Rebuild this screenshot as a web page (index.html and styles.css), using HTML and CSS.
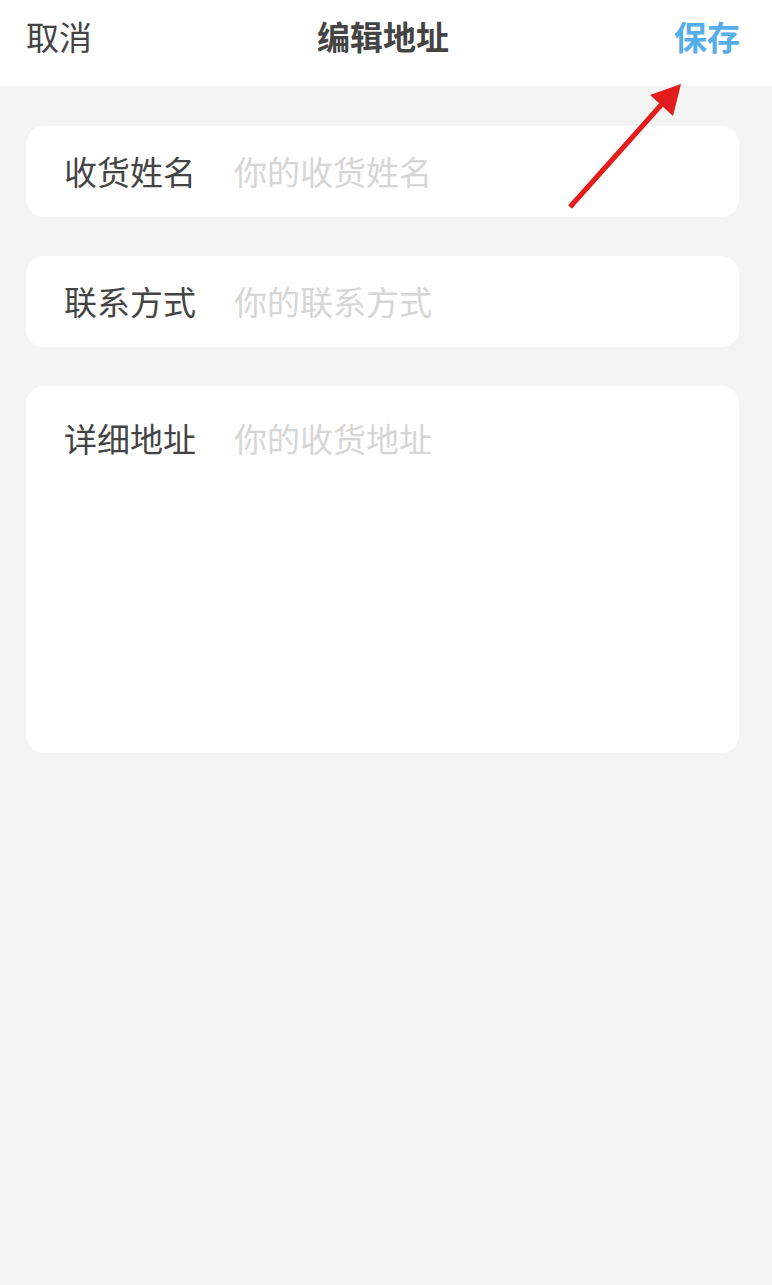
FILE: index.html
```html
<!DOCTYPE html>
<html lang="zh">
<head>
<meta charset="utf-8">
<title>编辑地址</title>
<link rel="stylesheet" href="styles.css">
</head>
<body>
<div class="page">
  <header class="topbar">
    <span class="cancel">取消</span>
    <span class="title">编辑地址</span>
    <span class="save">保存</span>
  </header>
  <main class="form">
    <div class="card">
      <span class="label">收货姓名</span>
      <span class="placeholder">你的收货姓名</span>
    </div>
    <div class="card">
      <span class="label">联系方式</span>
      <span class="placeholder">你的联系方式</span>
    </div>
    <div class="card card-tall">
      <span class="label">详细地址</span>
      <span class="placeholder">你的收货地址</span>
    </div>
  </main>
  <svg class="arrow" width="772" height="230" viewBox="0 0 772 230" aria-hidden="true">
    <line x1="570" y1="207" x2="662" y2="104" stroke="#e31c1c" stroke-width="5"/>
    <polygon points="681,84 650,95 673,116" fill="#e31c1c"/>
  </svg>
</div>
</body>
</html>
```
FILE: styles.css
```css
html, body {
  margin: 0;
  padding: 0;
}
body {
  background: #f4f4f4;
  font-family: "Noto Sans CJK SC", "Noto Sans", sans-serif;
  color: #444;
  width: 772px;
  height: 1285px;
}
.page {
  position: relative;
  min-height: 1285px;
}
.topbar {
  height: 86px;
  background: #fff;
  display: flex;
  align-items: center;
  justify-content: space-between;
  padding: 0 32px 14px 26px;
  box-sizing: border-box;
  font-size: 33px;
  line-height: 1;
}
.cancel {
  color: #444;
}
.title {
  font-weight: bold;
  color: #444;
}
.save {
  color: #55adea;
  font-weight: bold;
}
.form {
  display: flex;
  flex-direction: column;
  gap: 39px;
  padding: 40px 33px 0 26px;
}
.card {
  background: #fff;
  border-radius: 18px;
  height: 91px;
  display: flex;
  align-items: center;
  padding-left: 38px;
  font-size: 33px;
  line-height: 1;
  box-sizing: border-box;
}
.card-tall {
  height: 367px;
  align-items: flex-start;
  padding-top: 36px;
}
.label {
  color: #444;
  width: 132px;
  margin-right: 38px;
  flex-shrink: 0;
}
.placeholder {
  color: #d6d6d6;
}
.arrow {
  position: absolute;
  left: 0;
  top: 0;
  pointer-events: none;
}
```
